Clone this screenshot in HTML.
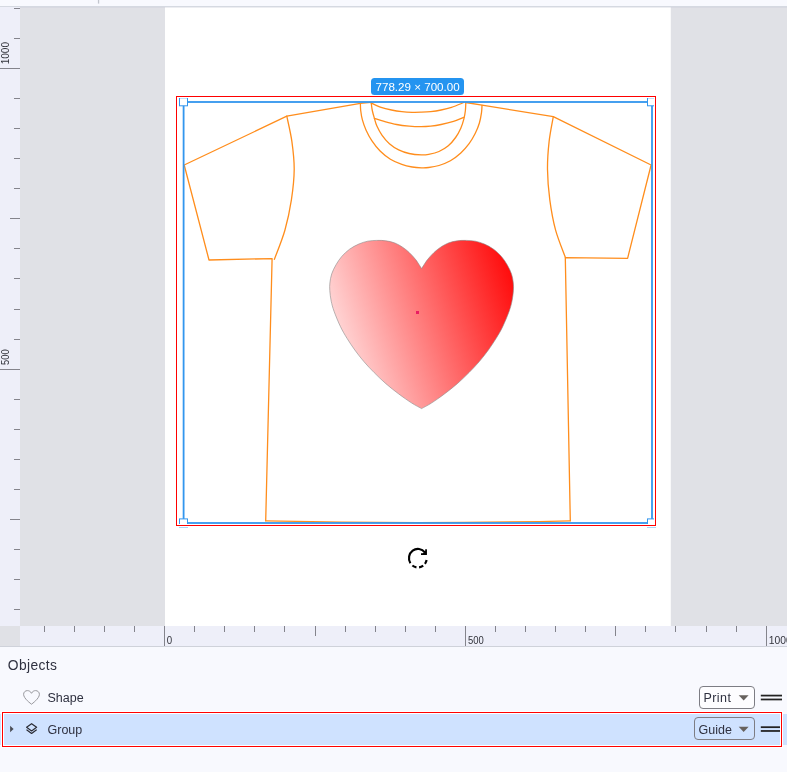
<!DOCTYPE html>
<html lang="en"><head><meta charset="utf-8"><title>T-shirt designer</title>
<style>
html,body{margin:0;padding:0;}
#wrap{position:absolute;left:0;top:0;width:787px;height:772px;will-change:transform;}
body{width:787px;height:772px;overflow:hidden;position:relative;background:#f8f9fe;font-family:"Liberation Sans",sans-serif;color:#2f3140;}
#stage{position:absolute;left:0;top:0;width:787px;height:647px;display:block;}
.hl{position:absolute;box-sizing:border-box;border:1px solid #f00;box-shadow:0 0 0 1px #fff, inset 0 0 0 1px #fff;pointer-events:none;}
#panel{position:absolute;left:0;top:647px;width:787px;height:125px;background:#f8f9fe;}
#panel h1{position:absolute;left:7.8px;top:11.2px;margin:0;font-weight:normal;font-size:13.8px;line-height:16px;letter-spacing:.4px;color:#2f3140;}
.row{position:absolute;left:0;width:787px;height:31px;}
.row .lbl{position:absolute;left:47.5px;top:7px;font-size:12.5px;line-height:16px;}
.sel{position:absolute;box-sizing:border-box;height:23px;border:1px solid #7d7d84;border-radius:4px;font-size:12.5px;line-height:16px;}
.sel span{position:absolute;top:3px;}
.sel i{position:absolute;right:6.3px;top:8.6px;width:0;height:0;border-left:5px solid transparent;border-right:5px solid transparent;border-top:5.5px solid #6a6560;}
.grip{position:absolute;left:761px;width:21px;height:5.7px;border-top:1.8px solid #222;border-bottom:1.8px solid #222;box-sizing:border-box;}
</style></head><body><div id="wrap">
<svg id="stage" width="787" height="647" viewBox="0 0 787 647">
<defs>
<linearGradient id="hg" gradientUnits="userSpaceOnUse" x1="305.5" y1="351.4" x2="524.6" y2="277">
<stop offset="0" stop-color="#fff"/><stop offset="1" stop-color="#f00"/>
</linearGradient>
</defs>
<rect x="0" y="0" width="787" height="647" fill="#e0e1e6"/>
<rect x="165" y="0" width="505.8" height="626" fill="#fff"/>
<!-- top bar -->
<rect x="0" y="0" width="787" height="6" fill="#f8f9fe"/>
<rect x="0" y="6" width="787" height="1" fill="#d5d9e1"/>
<rect x="0" y="7" width="787" height="1" fill="#c8ccd8" opacity=".35"/>
<rect x="97.9" y="0" width="1.3" height="3.6" fill="#c2c5cd"/>
<!-- rulers -->
<rect x="0" y="7" width="20" height="619" fill="#eeeff9"/>
<rect x="20" y="626" width="767" height="20" fill="#eeeff9"/>
<rect x="0" y="646" width="787" height="1" fill="#cfd2da"/>
<g fill="#84848c">
<rect x="44" y="626" width="1" height="6"/>
<rect x="74" y="626" width="1" height="6"/>
<rect x="104" y="626" width="1" height="6"/>
<rect x="134" y="626" width="1" height="6"/>
<rect x="164" y="626" width="1" height="20"/>
<rect x="194" y="626" width="1" height="6"/>
<rect x="224" y="626" width="1" height="6"/>
<rect x="254" y="626" width="1" height="6"/>
<rect x="284" y="626" width="1" height="6"/>
<rect x="315" y="626" width="1" height="10"/>
<rect x="345" y="626" width="1" height="6"/>
<rect x="375" y="626" width="1" height="6"/>
<rect x="405" y="626" width="1" height="6"/>
<rect x="435" y="626" width="1" height="6"/>
<rect x="465" y="626" width="1" height="20"/>
<rect x="495" y="626" width="1" height="6"/>
<rect x="525" y="626" width="1" height="6"/>
<rect x="555" y="626" width="1" height="6"/>
<rect x="585" y="626" width="1" height="6"/>
<rect x="615" y="626" width="1" height="10"/>
<rect x="645" y="626" width="1" height="6"/>
<rect x="675" y="626" width="1" height="6"/>
<rect x="706" y="626" width="1" height="6"/>
<rect x="736" y="626" width="1" height="6"/>
<rect x="766" y="626" width="1" height="20"/>
<rect x="14" y="8" width="6" height="1"/>
<rect x="14" y="38" width="6" height="1"/>
<rect x="0" y="68" width="20" height="1"/>
<rect x="14" y="98" width="6" height="1"/>
<rect x="14" y="128" width="6" height="1"/>
<rect x="14" y="158" width="6" height="1"/>
<rect x="14" y="188" width="6" height="1"/>
<rect x="10" y="218" width="10" height="1"/>
<rect x="14" y="248" width="6" height="1"/>
<rect x="14" y="278" width="6" height="1"/>
<rect x="14" y="309" width="6" height="1"/>
<rect x="14" y="339" width="6" height="1"/>
<rect x="0" y="369" width="20" height="1"/>
<rect x="14" y="399" width="6" height="1"/>
<rect x="14" y="429" width="6" height="1"/>
<rect x="14" y="459" width="6" height="1"/>
<rect x="14" y="489" width="6" height="1"/>
<rect x="10" y="519" width="10" height="1"/>
<rect x="14" y="549" width="6" height="1"/>
<rect x="14" y="579" width="6" height="1"/>
<rect x="14" y="609" width="6" height="1"/>
</g>
<g font-family="Liberation Sans, sans-serif" font-size="10.5" fill="#33343c">
<text x="166.7" y="643.5" textLength="5.4" lengthAdjust="spacingAndGlyphs">0</text>
<text x="468" y="643.5" textLength="15.8" lengthAdjust="spacingAndGlyphs">500</text>
<text x="768.8" y="643.5" textLength="23" lengthAdjust="spacingAndGlyphs">1000</text>
<text transform="translate(9,365) rotate(-90)" textLength="15.8" lengthAdjust="spacingAndGlyphs">500</text>
<text transform="translate(9,64.3) rotate(-90)" textLength="22.3" lengthAdjust="spacingAndGlyphs">1000</text>
</g>
<!-- t-shirt -->
<g fill="none" stroke="#ff8d1c" stroke-width="1.3" stroke-linejoin="round" stroke-linecap="round">
<path d="M370.7,102.3 L360.4,103.3 L286.8,116.2 L184.2,165 L209,260 L272.1,258.6 L265.7,520.8"/>
<path d="M265.7,520.8 Q418,524.3 570.3,520.8"/>
<path d="M465.8,102.5 L482,105.2 L553.3,116.7 L651.1,165 L627.6,258.3 L565.3,257.6 L570.3,520.8"/>
<path d="M286.80,116.20 C287.65,120.43 290.67,132.70 291.90,141.60 C293.13,150.50 294.28,159.88 294.20,169.60 C294.12,179.32 292.95,189.80 291.40,199.90 C289.85,210.00 287.73,220.30 284.90,230.20 C282.07,240.10 276.15,254.45 274.40,259.30"/>
<path d="M553.30,116.70 C552.60,120.85 550.07,132.78 549.10,141.60 C548.13,150.42 547.38,159.88 547.50,169.60 C547.62,179.32 548.45,189.80 549.80,199.90 C551.15,210.00 553.00,220.60 555.60,230.20 C558.20,239.80 563.77,252.95 565.40,257.50"/>
<path d="M360.40,103.50 C360.45,104.67 360.37,107.77 360.70,110.50 C361.03,113.23 361.50,116.62 362.40,119.90 C363.30,123.18 364.53,126.75 366.10,130.20 C367.67,133.65 369.47,137.13 371.80,140.60 C374.13,144.07 377.00,147.90 380.10,151.00 C383.20,154.10 386.78,156.97 390.40,159.20 C394.02,161.43 398.17,163.10 401.80,164.40 C405.43,165.70 408.92,166.43 412.20,167.00 C415.48,167.57 418.75,167.72 421.50,167.80 C424.25,167.88 425.78,167.88 428.70,167.50 C431.62,167.12 435.38,166.62 439.00,165.50 C442.62,164.38 446.77,162.88 450.40,160.80 C454.03,158.72 457.68,155.85 460.80,153.00 C463.92,150.15 466.68,146.98 469.10,143.70 C471.52,140.42 473.58,136.75 475.30,133.30 C477.02,129.85 478.37,126.45 479.40,123.00 C480.43,119.55 481.07,115.53 481.50,112.60 C481.93,109.67 481.92,106.60 482.00,105.40"/>
<path d="M371.20,102.80 C371.38,104.08 371.77,107.92 372.30,110.50 C372.83,113.08 373.63,115.70 374.40,118.30 C375.17,120.90 375.62,123.25 376.90,126.10 C378.18,128.95 380.02,132.47 382.10,135.40 C384.18,138.33 386.63,141.28 389.40,143.70 C392.17,146.12 395.42,148.27 398.70,149.90 C401.98,151.53 405.30,152.67 409.10,153.50 C412.90,154.33 418.23,154.77 421.50,154.90 C424.77,155.03 425.78,154.87 428.70,154.30 C431.62,153.73 435.73,152.92 439.00,151.50 C442.27,150.08 445.53,148.13 448.30,145.80 C451.07,143.47 453.52,140.43 455.60,137.50 C457.68,134.57 459.42,131.32 460.80,128.20 C462.18,125.08 463.13,121.75 463.90,118.80 C464.67,115.85 465.08,113.17 465.40,110.50 C465.72,107.83 465.73,104.08 465.80,102.80"/>
<path d="M371.20,103.10 C372.85,103.82 377.72,106.25 381.10,107.40 C384.48,108.55 388.05,109.30 391.50,110.00 C394.95,110.70 398.35,111.22 401.80,111.60 C405.25,111.98 409.00,112.20 412.20,112.30 C415.40,112.40 417.92,112.32 421.00,112.20 C424.08,112.08 427.35,111.97 430.70,111.60 C434.05,111.23 437.63,110.70 441.10,110.00 C444.57,109.30 447.70,108.65 451.50,107.40 C455.30,106.15 461.83,103.32 463.90,102.50"/>
<path d="M374.40,118.30 C376.03,118.82 380.50,120.37 384.20,121.40 C387.90,122.43 392.45,123.72 396.60,124.50 C400.75,125.28 405.03,125.75 409.10,126.10 C413.17,126.45 417.40,126.60 421.00,126.60 C424.60,126.60 427.35,126.45 430.70,126.10 C434.05,125.75 437.30,125.28 441.10,124.50 C444.90,123.72 449.70,122.60 453.50,121.40 C457.30,120.20 462.17,117.98 463.90,117.30"/>
</g>
<!-- heart -->
<path d="M421.60,268.60 C420.62,267.10 417.77,262.28 415.70,259.60 C413.63,256.92 411.37,254.55 409.20,252.50 C407.03,250.45 405.08,248.88 402.70,247.30 C400.32,245.72 397.70,244.08 394.90,243.00 C392.10,241.92 388.92,241.23 385.90,240.80 C382.88,240.37 379.83,240.33 376.80,240.40 C373.77,240.47 370.72,240.58 367.70,241.20 C364.68,241.82 361.72,242.77 358.70,244.10 C355.68,245.43 352.42,247.15 349.60,249.20 C346.78,251.25 344.07,253.80 341.80,256.40 C339.53,259.00 337.68,261.88 336.00,264.80 C334.32,267.72 332.72,270.88 331.70,273.90 C330.68,276.92 330.22,280.10 329.90,282.90 C329.58,285.70 329.58,287.67 329.80,290.70 C330.02,293.73 330.48,297.65 331.20,301.10 C331.92,304.55 332.55,307.13 334.10,311.40 C335.65,315.67 338.35,322.22 340.50,326.70 C342.65,331.18 344.62,334.42 347.00,338.30 C349.38,342.18 351.98,346.12 354.80,350.00 C357.62,353.88 360.67,357.83 363.90,361.60 C367.13,365.37 370.53,368.92 374.20,372.60 C377.87,376.28 381.80,380.13 385.90,383.70 C390.00,387.27 394.48,390.77 398.80,394.00 C403.12,397.23 408.00,400.67 411.80,403.10 C415.60,405.53 419.97,407.68 421.60,408.60 C423.23,407.68 427.60,405.53 431.40,403.10 C435.20,400.67 440.08,397.23 444.40,394.00 C448.72,390.77 453.20,387.27 457.30,383.70 C461.40,380.13 465.33,376.28 469.00,372.60 C472.67,368.92 476.07,365.37 479.30,361.60 C482.53,357.83 485.58,353.88 488.40,350.00 C491.22,346.12 493.82,342.18 496.20,338.30 C498.58,334.42 500.55,331.18 502.70,326.70 C504.85,322.22 507.55,315.67 509.10,311.40 C510.65,307.13 511.28,304.55 512.00,301.10 C512.72,297.65 513.18,293.73 513.40,290.70 C513.62,287.67 513.62,285.70 513.30,282.90 C512.98,280.10 512.52,276.92 511.50,273.90 C510.48,270.88 508.88,267.72 507.20,264.80 C505.52,261.88 503.67,259.00 501.40,256.40 C499.13,253.80 496.42,251.25 493.60,249.20 C490.78,247.15 487.52,245.43 484.50,244.10 C481.48,242.77 478.52,241.82 475.50,241.20 C472.48,240.58 469.43,240.47 466.40,240.40 C463.37,240.33 460.32,240.37 457.30,240.80 C454.28,241.23 451.10,241.92 448.30,243.00 C445.50,244.08 442.88,245.72 440.50,247.30 C438.12,248.88 436.17,250.45 434.00,252.50 C431.83,254.55 429.57,256.92 427.50,259.60 C425.43,262.28 422.58,267.10 421.60,268.60 Z" fill="url(#hg)" stroke="#8a8a8a" stroke-width="0.6"/>
<rect x="416" y="311" width="3" height="3" fill="#e91e63"/>
<!-- selection -->
<rect x="183.6" y="102" width="468.4" height="421" fill="none" stroke="#3296ee" stroke-width="1.8"/>
<g fill="#fff" stroke="#3296ee" stroke-width="1">
<rect x="179.5" y="97.8" width="8" height="8"/>
<rect x="647.5" y="97.8" width="8" height="8"/>
<rect x="179.5" y="518.9" width="8" height="8"/>
<rect x="647.5" y="518.9" width="8" height="8"/>
</g>
<!-- size label -->
<rect x="371" y="78" width="93" height="17" rx="3.5" fill="#2494f0"/>
<text x="417.6" y="91.2" text-anchor="middle" font-family="Liberation Sans, sans-serif" font-size="11.6" fill="#fff">778.29 × 700.00</text>
<!-- rotate -->
<path d="M410.39,563.27 A8.90,9.30 0 0 1 424.86,552.47 M426.59,559.97 A8.90,9.30 0 0 1 424.96,563.80 M423.21,565.63 A8.90,9.30 0 0 1 419.09,567.41 M416.46,567.39 A8.90,9.30 0 0 1 412.37,565.53" fill="none" stroke="#000" stroke-width="2.15"/>
<path d="M426.05,549.2 V554.15 H421" fill="none" stroke="#000" stroke-width="1.7"/>
<path d="M426.5,550.1 V554.6 H421.8 Z" fill="#000"/>
</svg>
<div class="hl" style="left:176px;top:96px;width:480px;height:430px;"></div>

<div id="panel">
<h1>Objects</h1>
<div class="row" style="top:35.5px;">
<svg style="position:absolute;left:22px;top:7px" width="19" height="16" viewBox="0 0.6 19 16"><path d="M9.5,14.8 C9,14.4 1.6,9.2 1.6,4.9 C1.6,2.8 3.3,1.2 5.4,1.2 C7.1,1.2 8.7,2.2 9.5,3.9 C10.3,2.2 11.9,1.2 13.6,1.2 C15.7,1.2 17.4,2.8 17.4,4.9 C17.4,9.2 10,14.4 9.5,14.8 Z" fill="none" stroke="#98989d" stroke-width="1"/></svg>
<span class="lbl">Shape</span>
<div class="sel" style="left:699px;top:3.5px;width:56px;background:#fdfdff;"><span style="left:3.4px;top:2.8px;letter-spacing:.45px">Print</span></div>
</div>
<div class="row" style="top:66.5px;height:31.5px;background:#cfe2ff;">
<svg style="position:absolute;left:10px;top:12px;overflow:visible" width="4" height="7" viewBox="0 0.3 4 7"><path d="M0.1,0 L3.6,3.3 L0.1,6.6 Z" fill="#494c55"/></svg>
<svg style="position:absolute;left:25px;top:9px;overflow:visible" width="13" height="13" viewBox="0 0.4 13 13"><g fill="none" stroke="#2b2d36" stroke-width="1.2" stroke-linejoin="round" stroke-linecap="round"><path d="M6.6,1.1 L11.6,4.7 L6.6,8.3 L1.6,4.7 Z"/><path d="M1.9,7.4 L6.6,10.9 L11.3,7.4"/></g></svg>
<span class="lbl" style="top:8px">Group</span>
<div class="sel" style="left:694px;top:3.5px;width:61px;"><span style="left:3.6px;top:3.6px">Guide</span></div>
</div>
</div>
<svg style="position:absolute;left:730px;top:680px" width="57" height="70" viewBox="730 680 57 70">
<g fill="#222"><rect x="760.8" y="694.7" width="21.2" height="1.75"/><rect x="760.8" y="698.6" width="21.2" height="1.75"/>
<rect x="760.8" y="726.3" width="21.2" height="1.75"/><rect x="760.8" y="730.1" width="21.2" height="1.75"/></g>
<g fill="#67625e"><path d="M738.7,695.3 H748.6 L743.65,700.4 Z"/><path d="M738.7,726.8 H748.6 L743.65,731.9 Z"/></g>
</svg>
<div class="hl" style="left:2px;top:712px;width:780px;height:35px;"></div>
</div></body></html>
